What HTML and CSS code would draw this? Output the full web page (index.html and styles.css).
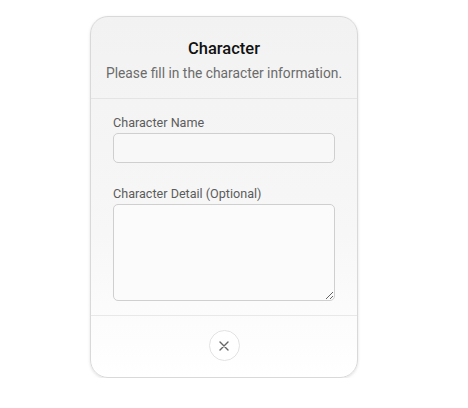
FILE: index.html
```html
<!DOCTYPE html>
<html>
<head>
<meta charset="utf-8">
<link rel="stylesheet" href="styles.css">
</head>
<body>
<div class="stage">
  <div class="card">
    <div class="card-header">
      <div class="title">Character</div>
      <div class="subtitle">Please fill in the character information.</div>
    </div>
    <div class="card-body">
      <label class="field">
        <span class="label">Character Name</span>
        <input class="input" type="text">
      </label>
      <label class="field">
        <span class="label">Character Detail (Optional)</span>
        <textarea class="textarea"></textarea>
      </label>
    </div>
    <div class="card-footer">
      <button class="close" aria-label="Close">
        <svg width="10" height="10" viewBox="0 0 10 10"><path d="M1 1L9 9M9 1L1 9" stroke="#666" stroke-width="1.4" stroke-linecap="round"/></svg>
      </button>
    </div>
  </div>
</div>
</body>
</html>
```
FILE: styles.css
```css
* { box-sizing: border-box; }
html, body { margin: 0; padding: 0; background: #fff; }
body { font-family: Roboto, "Noto Sans", sans-serif; }
.stage { padding: 16px 0 0 90px; }
.card {
  width: 268px;
  border: 1px solid #d9d9d9;
  border-radius: 18px;
  background: linear-gradient(#f2f2f2, #f7f7f7 60%, #fff);
  box-shadow: 0 1px 3px rgba(0,0,0,0.12);
  overflow: hidden;
}
.card-header {
  text-align: center;
  padding: 22px 10px 16px;
  border-bottom: 1px solid #e4e4e4;
}
.title { font-size: 16.5px; font-weight: 500; color: #111; line-height: 20px; }
.subtitle { font-size: 13.8px; color: #6b6b6b; line-height: 18px; margin-top: 5px; }
.card-body { padding: 16px 22px 14px; display: flex; flex-direction: column; gap: 23px; }
.field { display: flex; flex-direction: column; gap: 2px; }
.label { font-size: 12.6px; color: #5c5c5c; line-height: 16px; }
.input, .textarea {
  width: 100%;
  border: 1px solid #cfcfcf;
  border-radius: 5px;
  background: #f8f8f8;
  font: inherit;
  outline: none;
  margin: 0;
}
.input { height: 30px; }
.textarea { height: 97px; background: #fbfbfb; resize: vertical; display: block; }
.card-footer {
  border-top: 1px solid #e8e8e8;
  display: flex;
  justify-content: center;
  padding: 14px 0 16px;
}
.close {
  width: 31px; height: 31px;
  border-radius: 50%;
  border: 1px solid #e2e2e2;
  background: #fff;
  display: flex; align-items: center; justify-content: center;
  padding: 0;
}
```
